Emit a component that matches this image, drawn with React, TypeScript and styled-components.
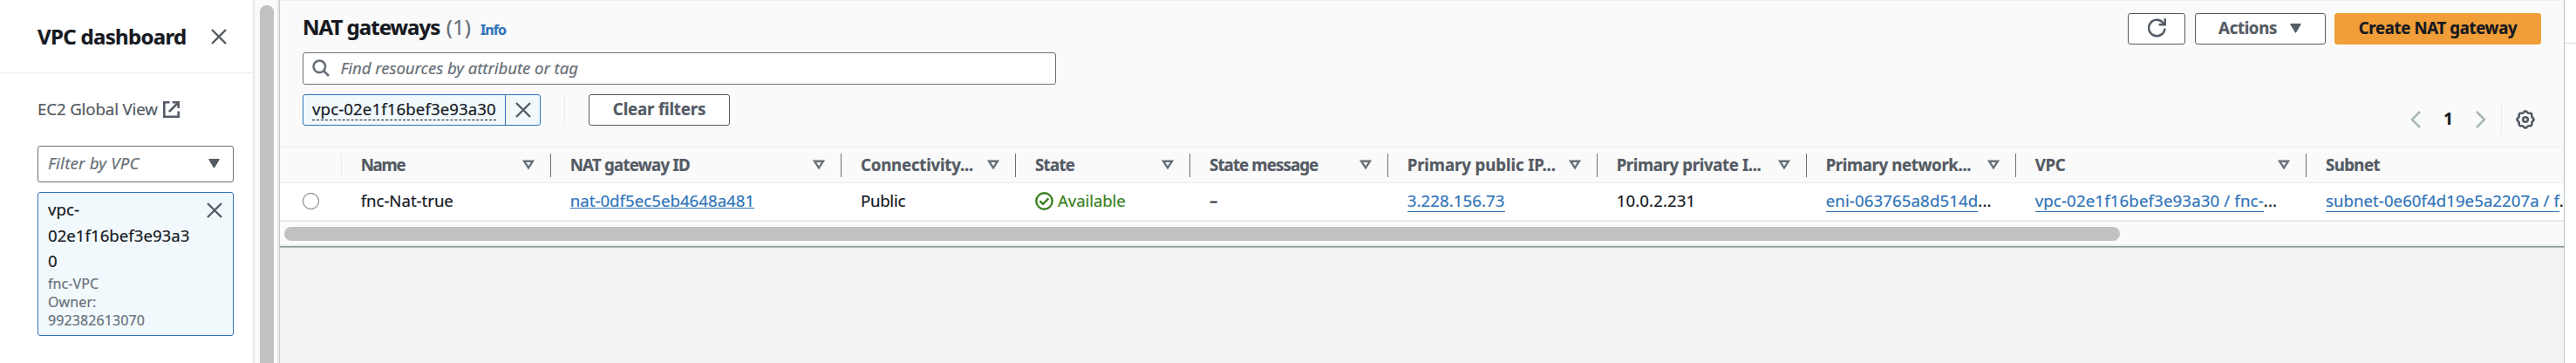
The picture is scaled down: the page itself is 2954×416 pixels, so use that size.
import React from "react";
import styled, { createGlobalStyle } from "styled-components";

const GlobalStyle = createGlobalStyle`
  *, *::before, *::after { box-sizing: border-box; }
  body {
    margin: 0;
    background: #fff;
    color: #16191f;
    font-family: "Noto Sans", "Open Sans", sans-serif;
    font-size: 18.67px;
    line-height: 28px;
    -webkit-text-stroke: 0.2px;
    overflow: hidden;
  }
`;

const Page = styled.div`
  display: flex;
  height: 416px;
  overflow: hidden;
`;

/* ---------- side navigation ---------- */

const Sidebar = styled.nav`
  flex: 0 0 290px;
  display: flex;
  flex-direction: column;
`;

const SidebarHeader = styled.header`
  height: 84px;
  padding: 0 30px 0 43px;
  display: flex;
  align-items: center;
  justify-content: space-between;
  border-bottom: 1px solid #e9ebed;
`;

const SidebarTitle = styled.h2`
  margin: 0;
  font-size: 24px;
  line-height: 32px;
  letter-spacing: -0.67px;
`;

const SidebarBody = styled.div`
  padding: 26px 22px 0 43px;
  display: flex;
  flex-direction: column;
`;

const GlobalViewLink = styled.a`
  display: flex;
  align-items: center;
  gap: 6px;
  height: 30px;
  margin-bottom: 27px;
  color: #545b64;
  letter-spacing: -0.13px;
`;

const VpcSelect = styled.div`
  height: 42px;
  padding: 0 15px 2px 11px;
  display: flex;
  align-items: center;
  justify-content: space-between;
  border: 1px solid #687078;
  border-radius: 3px;
  font-style: italic;
  letter-spacing: 0.2px;
  color: #687078;
`;

const VpcCard = styled.div`
  margin-top: 11px;
  height: 165px;
  padding: 4px 12px 0 11px;
  display: flex;
  justify-content: space-between;
  border: 1px solid #2f74b9;
  border-radius: 3px;
  background: #f2f9fd;
`;

const VpcCardText = styled.div`
  width: 168px;
  line-height: 29.5px;
  overflow-wrap: break-word;
`;

const VpcCardMeta = styled.div`
  padding-top: 1px;
  font-size: 16px;
  line-height: 21.33px;
  letter-spacing: 0.1px;
  color: #687078;
`;

const VpcCardClose = styled.div`
  padding-top: 7px;
  line-height: 0;
`;

const PageScrollbar = styled.div`
  flex: 0 0 30px;
  padding: 6px 4px 0 6px;
  border-left: 2px solid #e8e8e8;
  border-right: 2px solid #e8e8e8;
  background: #fafafa;
`;

const PageScrollThumb = styled.div`
  width: 16px;
  height: 430px;
  border-radius: 8px;
  background: #c1c1c1;
`;

/* ---------- main panel ---------- */

const Main = styled.main`
  flex: 0 0 2621px;
  min-width: 0;
  border-left: 1px solid #cdd3d3;
  border-right: 1px solid #c5cccc;
  background: #f2f3f3;
`;

const Panel = styled.section`
  height: 283px;
  background: #fafafa;
  border-top: 1px solid #f0f0f0;
  border-bottom: 1px solid #879596;
  box-shadow: 0 1px 1px rgba(0, 28, 36, 0.25);
`;

const PanelHeader = styled.div`
  height: 168px;
  padding: 0 26px;
  display: flex;
  justify-content: space-between;
  border-bottom: 1px solid #eaeded;
`;

const HeaderLeft = styled.div`
  width: 864px;
`;

const TitleRow = styled.div`
  display: flex;
  align-items: baseline;
  height: 59px;
  padding-top: 14px;
`;

const Title = styled.h1`
  margin: 0;
  font-size: 24px;
  line-height: 32px;
  letter-spacing: -0.98px;
`;

const Count = styled.span`
  margin-left: 7.5px;
  font-size: 24px;
  line-height: 32px;
  color: #687078;
`;

const InfoLink = styled.a`
  margin-left: 11px;
  font-size: 16px;
  font-weight: 700;
  letter-spacing: -0.9px;
  color: #2f74b9;
`;

const SearchBox = styled.div`
  height: 37px;
  padding: 0 11px 1px 10px;
  display: flex;
  align-items: center;
  gap: 12.5px;
  border: 1px solid #687078;
  border-radius: 3px;
  background: #fff;
  color: #687078;
  font-style: italic;
  letter-spacing: -0.08px;
`;

const FilterRow = styled.div`
  margin-top: 11px;
  display: flex;
  height: 36px;
`;

const Token = styled.div`
  display: flex;
  width: 273px;
  border: 1px solid #2f74b9;
  border-radius: 3px;
  background: #f2f9fd;
`;

const TokenLabel = styled.div`
  width: 231px;
  padding: 2px 0 0 10px;
  letter-spacing: 0.09px;
`;

const TokenText = styled.span`
  display: inline-block;
  height: 27px;
  border-bottom: 1px dashed #16191f;
`;

const TokenDismiss = styled.div`
  flex: 1;
  display: flex;
  align-items: center;
  justify-content: center;
  border-left: 1px solid #2f74b9;
`;

const Separator = styled.div<{ $tall?: boolean }>`
  width: 1px;
  height: ${(p) => (p.$tall ? 37 : 36)}px;
  background: #e9ebed;
`;

const Button = styled.div<{ $width: number; $primary?: boolean; $spacing?: number }>`
  width: ${(p) => p.$width}px;
  height: 36px;
  padding-bottom: 2px;
  display: flex;
  align-items: center;
  justify-content: center;
  border: 1px solid ${(p) => (p.$primary ? "#f19e39" : "#545b64")};
  border-radius: 3px;
  background: ${(p) => (p.$primary ? "#f19e39" : "#fff")};
  color: ${(p) => (p.$primary ? "#16191f" : "#545b64")};
  font-weight: 700;
  letter-spacing: ${(p) => p.$spacing ?? 0}px;
  white-space: nowrap;
`;

const ClearSlot = styled.div`
  margin-left: 27px;
`;

const SeparatorSlot = styled.div`
  margin-left: 27px;
`;

const HeaderRight = styled.div`
  display: flex;
  flex-direction: column;
  align-items: flex-end;
  padding-top: 14px;
`;

const ActionRow = styled.div`
  display: flex;
  gap: 10.5px;
`;

const ButtonIcon = styled.span`
  margin-left: 15px;
  display: flex;
`;

const Pagination = styled.div`
  margin-top: 67px;
  padding-right: 7px;
  display: flex;
  align-items: center;
  height: 37px;
`;

const PageNumber = styled.span`
  width: 63px;
  padding-bottom: 2px;
  text-align: center;
  font-weight: 700;
`;

const GearSlot = styled.span`
  margin-left: 16px;
  display: flex;
`;

const NextSlot = styled.span`
  margin-right: 17px;
  display: flex;
`;

/* ---------- table ---------- */

const TableViewport = styled.div`
  overflow: hidden;
`;

const TableRow = styled.div<{ $head?: boolean }>`
  display: flex;
  width: 2700px;
  height: ${(p) => (p.$head ? 41 : 44)}px;
  background: ${(p) => (p.$head ? "#fafafa" : "#fff")};
  border-bottom: ${(p) => (p.$head ? "1px solid #eaeded" : "2px solid #e8e8e8")};
`;

const HeadCell = styled.div<{ $width: number; $spacing: number; $divider: string }>`
  flex: 0 0 ${(p) => p.$width}px;
  display: flex;
  align-items: center;
  justify-content: space-between;
  padding: 0 19px 0 22px;
  font-weight: 700;
  letter-spacing: ${(p) => p.$spacing}px;
  color: #545b64;
  white-space: nowrap;
  background: linear-gradient(${(p) => p.$divider}, ${(p) => p.$divider}) right 7px / 1px 27px no-repeat;
`;

const BodyCell = styled.div<{ $width: number; $spacing: number }>`
  flex: 0 0 ${(p) => p.$width}px;
  display: flex;
  align-items: center;
  padding: 0 0 2px 22px;
  letter-spacing: ${(p) => p.$spacing}px;
  white-space: nowrap;
`;

const SelectCell = styled.div`
  flex: 0 0 70.67px;
  display: flex;
  align-items: center;
  padding: 0 0 2px 26px;
`;

const Radio = styled.span`
  width: 18.67px;
  height: 18.67px;
  margin-top: 1px;
  border: 1px solid #687078;
  border-radius: 50%;
  background: #fff;
`;

const InlineLink = styled.a`
  color: #2f74b9;
  text-decoration: underline;
  text-decoration-thickness: 1px;
  text-underline-offset: 1px;
  text-decoration-skip-ink: none;
`;

const BlockLink = styled.a`
  height: 27px;
  margin-bottom: 1px;
  color: #2f74b9;
  border-bottom: 1px solid #2f74b9;
`;

const Status = styled.span`
  display: flex;
  align-items: center;
  gap: 5px;
  color: #3a8020;
`;

const TableScrollbar = styled.div`
  height: 28px;
  padding: 6px 5px 0;
  background: linear-gradient(#fafafa 26px, #eeeeee 26px);
`;

const TableScrollThumb = styled.div`
  width: 2105px;
  height: 16px;
  border-radius: 8px;
  background: #c1c1c1;
`;

const ToolsGutter = styled.aside`
  flex: 1;
  height: 50px;
  border-bottom: 1px solid #d5dbdb;
`;

/* ---------- icons ---------- */

const CloseIcon = () => (
  <svg width="18" height="18" viewBox="0 0 18 18" fill="none" stroke="#545b64" strokeWidth="2.4">
    <path d="M1 1l16 16M17 1L1 17" />
  </svg>
);

const CaretIcon = () => (
  <svg width="13" height="11" viewBox="0 0 13 11" fill="#545b64">
    <path d="M1 .7h11L6.5 10z" stroke="#545b64" strokeWidth="1.4" strokeLinejoin="round" />
  </svg>
);

const SortIcon = () => (
  <svg width="14" height="12" viewBox="0 0 14 12" fill="none" stroke="#687078" strokeWidth="2.4">
    <path d="M2 1.7h10L7 9.3z" />
  </svg>
);

const ExternalIcon = () => (
  <svg width="19" height="19" viewBox="0 0 19 19" fill="none" stroke="#545b64" strokeWidth="2.6">
    <path d="M7.5 1.3H1.3v16.4h16.4v-6.2M10.7 1.3h7v6.6M17.5 1.5L6.8 12.2" />
  </svg>
);

const SearchIcon = () => (
  <svg width="20" height="20" viewBox="0 0 20 20" fill="none" stroke="#687078" strokeWidth="2.6">
    <circle cx="8.3" cy="8.3" r="6.8" />
    <path d="M13 13l6 6" />
  </svg>
);

const RefreshIcon = () => (
  <svg width="21" height="22" viewBox="0 0 21 22" fill="none" stroke="#545b64" strokeWidth="2.5">
    <path d="M19.5 11.6a9.2 9.2 0 1 1-2.4-6.8L19.3 7" />
    <path d="M19.7 .3v7h-7" />
  </svg>
);

const ChevronIcon = ({ next }: { next?: boolean }) => (
  <svg width="12" height="20" viewBox="0 0 12 20" fill="none" stroke="#aab7b8" strokeWidth="2.6">
    <path d={next ? "M1 1l9 9-9 9" : "M11 1l-9 9 9 9"} />
  </svg>
);

const gearPath = (() => {
  const points: string[] = [];
  for (let i = 0; i <= 96; i++) {
    const a = (i / 96) * Math.PI * 2;
    const r = 8.8 + 0.75 * Math.cos(a * 8);
    points.push(`${(11 + r * Math.cos(a)).toFixed(2)} ${(11 + r * Math.sin(a)).toFixed(2)}`);
  }
  return `M${points.join("L")}Z`;
})();

const GearIcon = () => (
  <svg width="22" height="22" viewBox="0 0 22 22" fill="none" stroke="#545b64" strokeWidth="2.6">
    <path d={gearPath} />
    <circle cx="11" cy="11" r="2.8" />
  </svg>
);

const CheckIcon = () => (
  <svg width="21" height="21" viewBox="0 0 21 21" fill="none" stroke="#3a8020" strokeWidth="2.4">
    <circle cx="10.5" cy="10.5" r="9.2" />
    <path d="M5.4 10.3l3.6 3.6 6.4-6.6" />
  </svg>
);

/* ---------- data ---------- */

type Column = {
  label: string;
  width: number;
  labelSpacing: number;
  cellSpacing: number;
  cell: React.ReactNode;
};

const columns: Column[] = [
  { label: "Name", width: 240, labelSpacing: -1.2, cellSpacing: -0.05, cell: "fnc-Nat-true" },
  {
    label: "NAT gateway ID",
    width: 333.33,
    labelSpacing: -0.75,
    cellSpacing: 0.01,
    cell: <InlineLink>nat-0df5ec5eb4648a481</InlineLink>,
  },
  { label: "Connectivity...", width: 200, labelSpacing: -0.22, cellSpacing: -0.3, cell: "Public" },
  {
    label: "State",
    width: 200,
    labelSpacing: -0.7,
    cellSpacing: -0.12,
    cell: (
      <Status>
        <CheckIcon />
        Available
      </Status>
    ),
  },
  { label: "State message", width: 226.67, labelSpacing: -0.88, cellSpacing: 0, cell: "–" },
  {
    label: "Primary public IP...",
    width: 240,
    labelSpacing: -0.1,
    cellSpacing: 0.07,
    cell: <BlockLink>3.228.156.73</BlockLink>,
  },
  { label: "Primary private I...", width: 240, labelSpacing: -0.38, cellSpacing: 0.1, cell: "10.0.2.231" },
  {
    label: "Primary network...",
    width: 240,
    labelSpacing: -0.38,
    cellSpacing: 0.1,
    cell: (
      <>
        <BlockLink>eni-063765a8d514d</BlockLink>...
      </>
    ),
  },
  {
    label: "VPC",
    width: 333.33,
    labelSpacing: -0.36,
    cellSpacing: 0.13,
    cell: (
      <>
        <BlockLink>vpc-02e1f16bef3e93a30 / fnc-</BlockLink>...
      </>
    ),
  },
  {
    label: "Subnet",
    width: 333.33,
    labelSpacing: -0.6,
    cellSpacing: 0.03,
    cell: (
      <>
        <BlockLink>subnet-0e60f4d19e5a2207a / f</BlockLink>...
      </>
    ),
  },
];

export default function App() {
  return (
    <>
      <GlobalStyle />
      <Page>
        <Sidebar>
          <SidebarHeader>
            <SidebarTitle>VPC dashboard</SidebarTitle>
            <CloseIcon />
          </SidebarHeader>
          <SidebarBody>
            <GlobalViewLink>
              EC2 Global View
              <ExternalIcon />
            </GlobalViewLink>
            <VpcSelect>
              Filter by VPC
              <CaretIcon />
            </VpcSelect>
            <VpcCard>
              <VpcCardText>
                vpc-02e1f16bef3e93a30
                <VpcCardMeta>
                  fnc-VPC
                  <br />
                  Owner:
                  <br />
                  992382613070
                </VpcCardMeta>
              </VpcCardText>
              <VpcCardClose>
                <CloseIcon />
              </VpcCardClose>
            </VpcCard>
          </SidebarBody>
        </Sidebar>

        <PageScrollbar>
          <PageScrollThumb />
        </PageScrollbar>

        <Main>
          <Panel>
            <PanelHeader>
              <HeaderLeft>
                <TitleRow>
                  <Title>NAT gateways</Title>
                  <Count>(1)</Count>
                  <InfoLink>Info</InfoLink>
                </TitleRow>
                <SearchBox>
                  <SearchIcon />
                  Find resources by attribute or tag
                </SearchBox>
                <FilterRow>
                  <Token>
                    <TokenLabel>
                      <TokenText>vpc-02e1f16bef3e93a30</TokenText>
                    </TokenLabel>
                    <TokenDismiss>
                      <CloseIcon />
                    </TokenDismiss>
                  </Token>
                  <SeparatorSlot>
                    <Separator />
                  </SeparatorSlot>
                  <ClearSlot>
                    <Button $width={162} $spacing={-0.16}>
                      Clear filters
                    </Button>
                  </ClearSlot>
                </FilterRow>
              </HeaderLeft>
              <HeaderRight>
                <ActionRow>
                  <Button $width={66}>
                    <RefreshIcon />
                  </Button>
                  <Button $width={150} $spacing={-0.37}>
                    Actions
                    <ButtonIcon>
                      <CaretIcon />
                    </ButtonIcon>
                  </Button>
                  <Button $width={237} $spacing={-0.38} $primary>
                    Create NAT gateway
                  </Button>
                </ActionRow>
                <Pagination>
                  <ChevronIcon />
                  <PageNumber>1</PageNumber>
                  <NextSlot>
                    <ChevronIcon next />
                  </NextSlot>
                  <Separator $tall />
                  <GearSlot>
                    <GearIcon />
                  </GearSlot>
                </Pagination>
              </HeaderRight>
            </PanelHeader>

            <TableViewport>
              <TableRow $head>
                <HeadCell $width={70.67} $spacing={0} $divider="#e9ebed" />
                {columns.map((c) => (
                  <HeadCell key={c.label} $width={c.width} $spacing={c.labelSpacing} $divider="#687078">
                    {c.label}
                    <SortIcon />
                  </HeadCell>
                ))}
              </TableRow>
              <TableRow>
                <SelectCell>
                  <Radio />
                </SelectCell>
                {columns.map((c) => (
                  <BodyCell key={c.label} $width={c.width} $spacing={c.cellSpacing}>
                    {c.cell}
                  </BodyCell>
                ))}
              </TableRow>
            </TableViewport>
            <TableScrollbar>
              <TableScrollThumb />
            </TableScrollbar>
          </Panel>
        </Main>
        <ToolsGutter />
      </Page>
    </>
  );
}
